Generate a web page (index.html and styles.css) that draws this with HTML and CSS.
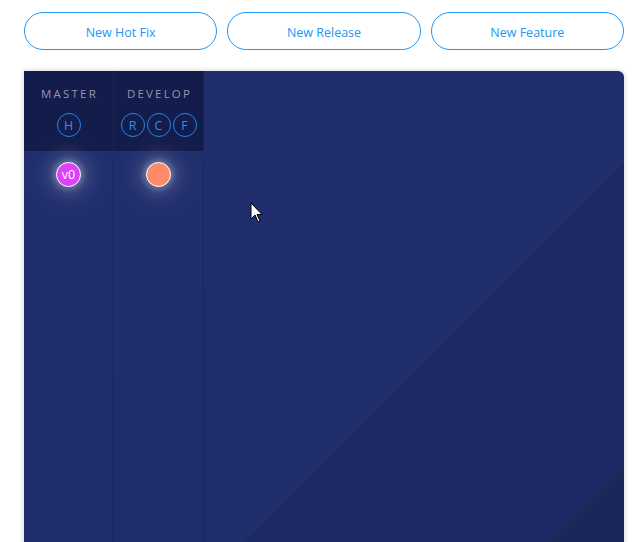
FILE: index.html
```html
<!DOCTYPE html>
<html lang="en">
<head>
<meta charset="utf-8">
<title>Git flow</title>
<link rel="stylesheet" href="styles.css">
</head>
<body>
  <div class="actions">
    <button class="btn">New Hot Fix</button>
    <button class="btn">New Release</button>
    <button class="btn">New Feature</button>
  </div>
  <div class="board">
    <div class="branch">
      <div class="branch-head">
        <div class="branch-name">MASTER</div>
        <div class="branch-ops">
          <span class="op">H</span>
        </div>
      </div>
      <div class="branch-body">
        <div class="commit commit-master">v0</div>
      </div>
    </div>
    <div class="branch">
      <div class="branch-head">
        <div class="branch-name">DEVELOP</div>
        <div class="branch-ops">
          <span class="op">R</span>
          <span class="op">C</span>
          <span class="op">F</span>
        </div>
      </div>
      <div class="branch-body">
        <div class="commit commit-develop"></div>
      </div>
    </div>
    <svg class="cursor" width="13" height="21" viewBox="0 0 13 21">
      <path d="M1 1 L1 17 L5 13 L8 20 L10 19 L7 12.5 L12 12.5 Z" fill="#fff" stroke="#000" stroke-width="1" stroke-linejoin="miter"/>
    </svg>
  </div>
</body>
</html>
```

FILE: styles.css
```css
* { box-sizing: border-box; }
html, body { margin: 0; background: #fff; }
body {
  padding: 12px 16px 0 24px;
  font-family: "Open Sans", "DejaVu Sans", sans-serif;
  overflow: hidden;
}
.actions {
  display: flex;
  gap: 10px;
  width: 600px;
}
.btn {
  flex: 1;
  height: 38px;
  border: 1px solid #2196f3;
  border-radius: 19px;
  background: #fff;
  color: #2196f3;
  font-family: "Open Sans", sans-serif;
  font-size: 12.5px;
  padding: 2px 0 0;
}
.board {
  position: relative;
  margin-top: 21px;
  width: 600px;
  height: 500px;
  display: flex;
  border-radius: 0 6px 0 0;
  overflow: hidden;
  background: linear-gradient(135deg,
    #202e6e 0, #202e6e 279px,
    #1f2d6a 279px, #1f2d6a 489px,
    #1c2964 489px, #1c2964 704px,
    #1b2659 704px);
  box-shadow: 0 0 4px 1px rgba(0,0,0,0.14);
}
.branch {
  width: 90px;
  display: flex;
  flex-direction: column;
}
.branch-head {
  height: 80px;
  background: #141c4b;
  border-right: 1px solid #1a2354;
  display: flex;
  flex-direction: column;
  align-items: center;
  padding-top: 15px;
}
.branch-name {
  color: #9298ad;
  font-size: 11.5px;
  letter-spacing: 2.2px;
  line-height: 16px;
  margin-right: -2px;
}
.branch-ops {
  display: flex;
  gap: 2px;
  margin-top: 11px;
}
.op {
  width: 24px;
  height: 24px;
  border: 1.5px solid #1e88e5;
  border-radius: 50%;
  color: #2196f3;
  font-size: 12.5px;
  display: flex;
  align-items: center;
  justify-content: center;
}
.branch-body {
  flex: 1;
  margin-top: 10px;
  border-right: 1px solid #18235a;
  display: flex;
  flex-direction: column;
  align-items: center;
}
.commit {
  width: 25px;
  height: 25px;
  margin-top: 1px;
  border-radius: 50%;
  border: 1.5px solid #fff;
  color: #fff;
  font-size: 12.5px;
  display: flex;
  align-items: center;
  justify-content: center;
  box-shadow: 0 0 5px 3px rgba(255,255,255,0.22), 0 0 14px 9px rgba(255,255,255,0.10), 0 0 24px 16px rgba(255,255,255,0.05);
}
.commit-master { background: #e040fb; }
.commit-develop { background: #ff8a65; }
.cursor {
  position: absolute;
  left: 226px;
  top: 131px;
}
```
